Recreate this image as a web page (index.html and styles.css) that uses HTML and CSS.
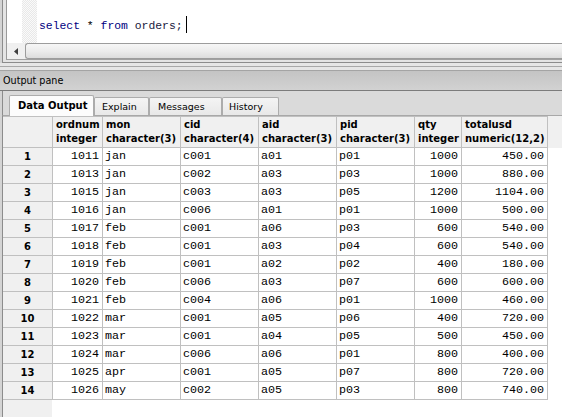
FILE: index.html
```html
<!DOCTYPE html>
<html>
<head>
<meta charset="utf-8">
<link rel="stylesheet" href="styles.css">
</head>
<body>
<div class="app">
  <div class="editor-frame">
    <div class="editor">
      <div class="gutter"></div>
      <div class="code"><span class="kw">select</span> <span class="op">*</span> <span class="kw">from</span> <span class="id">orders;</span><span class="caret"></span></div>
    </div>
    <div class="hscroll">
      <div class="arrow"><svg width="4" height="7" viewBox="0 0 4 7"><path d="M4 0 L0 3.5 L4 7 Z" fill="#404040"/></svg></div>
      <div class="thumb"></div>
    </div>
  </div>
  <div class="gap"></div>
  <div class="pane-title">Output pane</div>
  <div class="tabbar">
    <div class="tab active">Data Output</div>
    <div class="tab t-explain">Explain</div>
    <div class="tab t-messages">Messages</div>
    <div class="tab t-history">History</div>
  </div>
  <div class="gridwrap">
    <table class="grid">
      <colgroup>
        <col class="c-rn"><col class="c-ord"><col class="c-ch"><col class="c-ch"><col class="c-ch"><col class="c-ch"><col class="c-qty"><col class="c-tot">
      </colgroup>
      <thead>
        <tr>
          <th class="corner"></th>
          <th>ordnum<br>integer</th>
          <th>mon<br>character(3)</th>
          <th>cid<br>character(4)</th>
          <th>aid<br>character(3)</th>
          <th>pid<br>character(3)</th>
          <th>qty<br>integer</th>
          <th>totalusd<br>numeric(12,2)</th>
        </tr>
      </thead>
      <tbody>
        <tr><th class="rn">1</th><td class="num">1011</td><td>jan</td><td>c001</td><td>a01</td><td>p01</td><td class="num">1000</td><td class="num">450.00</td></tr>
        <tr><th class="rn">2</th><td class="num">1013</td><td>jan</td><td>c002</td><td>a03</td><td>p03</td><td class="num">1000</td><td class="num">880.00</td></tr>
        <tr><th class="rn">3</th><td class="num">1015</td><td>jan</td><td>c003</td><td>a03</td><td>p05</td><td class="num">1200</td><td class="num">1104.00</td></tr>
        <tr><th class="rn">4</th><td class="num">1016</td><td>jan</td><td>c006</td><td>a01</td><td>p01</td><td class="num">1000</td><td class="num">500.00</td></tr>
        <tr><th class="rn">5</th><td class="num">1017</td><td>feb</td><td>c001</td><td>a06</td><td>p03</td><td class="num">600</td><td class="num">540.00</td></tr>
        <tr><th class="rn">6</th><td class="num">1018</td><td>feb</td><td>c001</td><td>a03</td><td>p04</td><td class="num">600</td><td class="num">540.00</td></tr>
        <tr><th class="rn">7</th><td class="num">1019</td><td>feb</td><td>c001</td><td>a02</td><td>p02</td><td class="num">400</td><td class="num">180.00</td></tr>
        <tr><th class="rn">8</th><td class="num">1020</td><td>feb</td><td>c006</td><td>a03</td><td>p07</td><td class="num">600</td><td class="num">600.00</td></tr>
        <tr><th class="rn">9</th><td class="num">1021</td><td>feb</td><td>c004</td><td>a06</td><td>p01</td><td class="num">1000</td><td class="num">460.00</td></tr>
        <tr><th class="rn">10</th><td class="num">1022</td><td>mar</td><td>c001</td><td>a05</td><td>p06</td><td class="num">400</td><td class="num">720.00</td></tr>
        <tr><th class="rn">11</th><td class="num">1023</td><td>mar</td><td>c001</td><td>a04</td><td>p05</td><td class="num">500</td><td class="num">450.00</td></tr>
        <tr><th class="rn">12</th><td class="num">1024</td><td>mar</td><td>c006</td><td>a06</td><td>p01</td><td class="num">800</td><td class="num">400.00</td></tr>
        <tr><th class="rn">13</th><td class="num">1025</td><td>apr</td><td>c001</td><td>a05</td><td>p07</td><td class="num">800</td><td class="num">720.00</td></tr>
        <tr><th class="rn">14</th><td class="num">1026</td><td>may</td><td>c002</td><td>a05</td><td>p03</td><td class="num">800</td><td class="num">740.00</td></tr>
      </tbody>
    </table>
  </div>
</div>
</body>
</html>
```

FILE: styles.css
```css
html, body {
  margin: 0;
  padding: 0;
  width: 562px;
  height: 417px;
  overflow: hidden;
  background: #d4d4d4;
}

.app {
  width: 562px;
  height: 417px;
  display: flex;
  flex-direction: column;
  font-family: "DejaVu Sans", sans-serif;
  color: #000;
}

/* ---------- SQL editor ---------- */
.editor-frame {
  flex: none;
  height: 60px;
  margin-left: 2px;
  border-left: 1px solid #8c8c8c;
  border-bottom: 1px solid #8c8c8c;
  padding-left: 3px;
  padding-bottom: 2px;
  background: #e4e4e4;
  display: flex;
  flex-direction: column;
}

.editor {
  flex: none;
  height: 43px;
  display: flex;
  background: #fff;
  border-left: 1px solid #9a9a9a;
}

.gutter {
  flex: none;
  width: 15px;
  margin-left: 15px;
  background-color: #f4f4f4;
  background-image: repeating-conic-gradient(#e8e8e8 0 25%, #fafafa 0 50%);
  background-size: 2px 2px;
}

.code {
  padding-left: 2px;
  padding-top: 16px;
  font-family: "Liberation Mono", monospace;
  font-size: 11.4px;
  line-height: 14px;
  color: #000080;
  white-space: pre;
}

.kw { color: #00007f; }
.op { color: #000; }
.id { color: #1a1a40; }

.caret {
  display: inline-block;
  width: 1px;
  height: 17px;
  margin-left: 3px;
  vertical-align: -4px;
  background: #000;
}

.hscroll {
  flex: none;
  height: 16px;
  display: flex;
  background: #f0f0f0;
  border-left: 1px solid #9a9a9a;
  border-bottom: 1px solid #a0a0a0;
}

.arrow {
  width: 17px;
  display: flex;
  align-items: center;
  justify-content: center;
}

.thumb {
  flex: 1;
  margin: 0 0 0 1px;
  border: 1px solid #9c9c9c;
  border-right: none;
  border-radius: 3px 0 0 3px;
  background: linear-gradient(#f6f6f6, #ececec 50%, #dcdcdc);
}

.gap {
  flex: none;
  height: 7px;
  background: linear-gradient(#e6e6e6 3px, #a8a8a8 3px 4px, #e6e6e6 4px);
}

/* ---------- Output pane ---------- */
.pane-title {
  flex: none;
  height: 19px;
  padding-left: 3px;
  font-size: 9.6px;
  line-height: 19px;
  background: linear-gradient(#c4c4c4, #d2d2d2);
  border-top: 1px solid #a4a4a4;
  border-bottom: 1px solid #7c7c7c;
}

.tabbar {
  flex: none;
  height: 24px;
  margin-left: 2px;
  border-left: 1px solid #8c8c8c;
  padding-left: 6px;
  display: flex;
  align-items: flex-end;
  background: #dadada;
  border-bottom: 1px solid #a8a8a8;
}

.tab {
  box-sizing: border-box;
  height: 18px;
  padding-left: 7px;
  font-size: 9.5px;
  line-height: 17px;
  white-space: nowrap;
  background: linear-gradient(#f4f4f4, #e8e8e8);
  border: 1px solid #acacac;
  border-bottom: none;
  border-radius: 2px 2px 0 0;
}

.t-explain { width: 55px; }
.t-messages { width: 73px; padding-left: 8px; }
.t-history { width: 57px; padding-left: 6px; }

.tab.active {
  width: 85px;
  height: 21px;
  padding-left: 8px;
  font-weight: bold;
  font-size: 10px;
  line-height: 20px;
  background: #fcfcfc;
  margin-bottom: -1px;
  position: relative;
}

/* ---------- Grid ---------- */
.gridwrap {
  flex: 1;
  margin-left: 2px;
  border-left: 1px solid #8c8c8c;
  background:
    linear-gradient(#f0f0f0, #f0f0f0) 0 0 / 100% 32px no-repeat,
    linear-gradient(#f0f0f0, #f0f0f0) 0 0 / 49px 100% no-repeat,
    #fff;
  overflow: hidden;
}

.grid {
  border-collapse: separate;
  border-spacing: 0;
  table-layout: fixed;
  width: 545px;
}

.c-rn { width: 50px; }
.c-ord { width: 50px; }
.c-ch { width: 78px; }
.c-qty { width: 47px; }
.c-tot { width: 86px; }

.grid th, .grid td {
  box-sizing: border-box;
  border-right: 1px solid #c0c0c0;
  border-bottom: 1px solid #c0c0c0;
  padding: 0;
  overflow: hidden;
  white-space: nowrap;
}

.grid thead tr { height: 32px; }

.grid thead th {
  border-top: 1px solid #c0c0c0;
  padding: 1px 0 0 3px;
  text-align: left;
  vertical-align: top;
  font-size: 10px;
  line-height: 14px;
  font-weight: bold;
  background: #f0f0f0;
  color: #000;
}

.grid thead th.corner { padding: 0; }

.grid tbody tr { height: 18px; }

.grid th.rn {
  background: #f0f0f0;
  text-align: center;
  font-size: 10px;
  font-weight: bold;
  line-height: 17px;
}

.grid td {
  font-family: "Liberation Mono", monospace;
  font-size: 11.7px;
  line-height: 17px;
  padding: 0 3px 0 2px;
  color: #000;
}

.grid td.num { text-align: right; }
```
